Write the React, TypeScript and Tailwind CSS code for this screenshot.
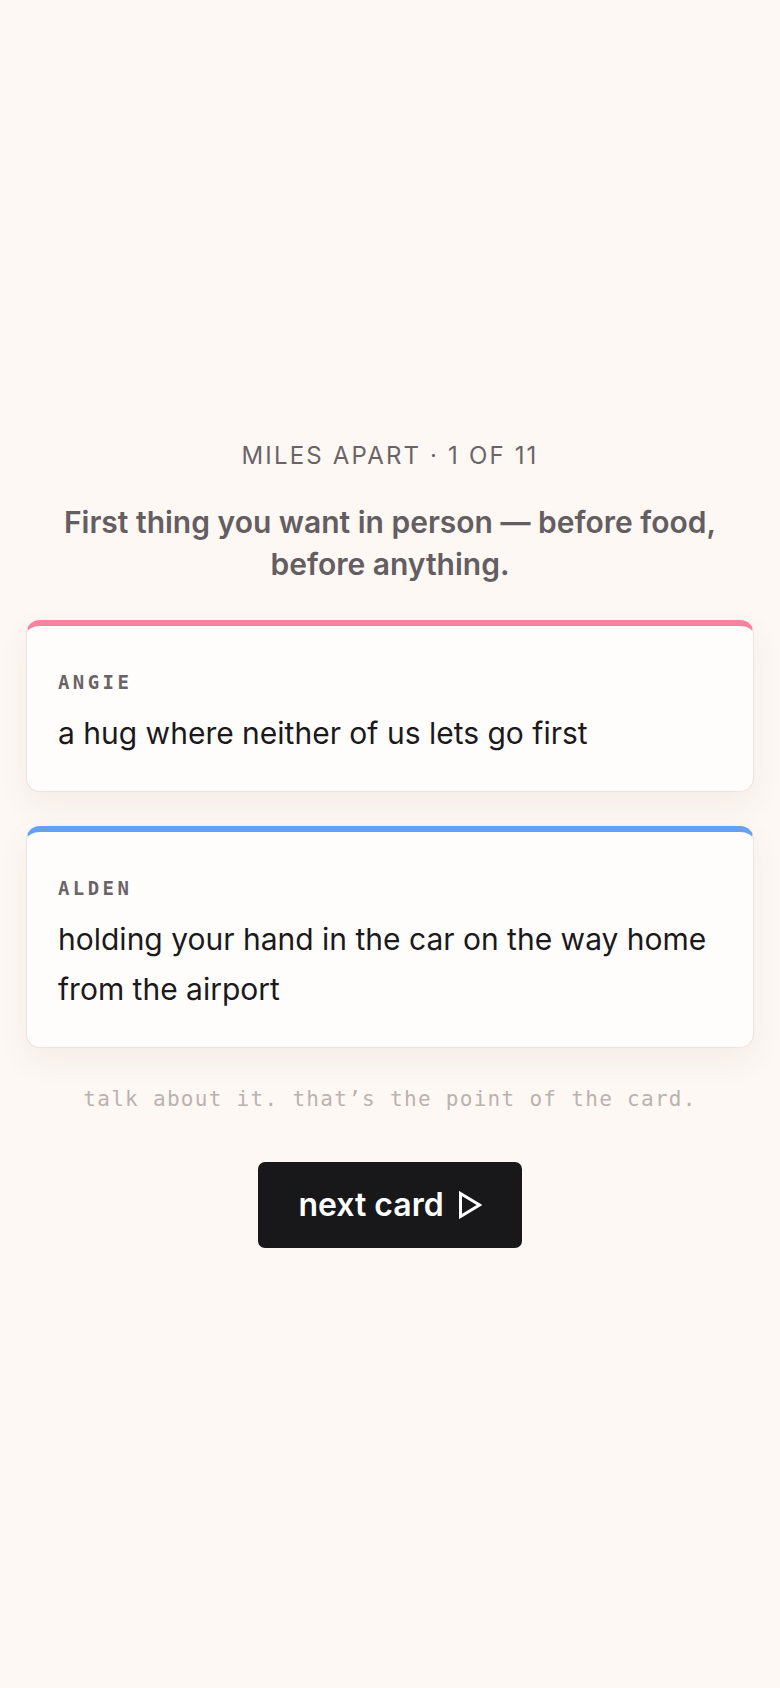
const sans = "font-['Inter','Noto_Sans',sans-serif]";
const mono = "font-['DejaVu_Sans_Mono','Liberation_Mono',monospace]";

type Answer = {
  name: string;
  text: string;
  accent: string;
};

const answers: Answer[] = [
  { name: 'Angie', text: 'a hug where neither of us lets go first', accent: 'border-t-[#f6829f]' },
  { name: 'Alden', text: 'holding your hand in the car on the way home from the airport', accent: 'border-t-[#66a0f2]' },
];

function PlayIcon() {
  return (
    <svg width="24" height="28" viewBox="0 0 24 28" fill="none" className="shrink-0">
      <path d="M2.5 2.5 L21.5 14 L2.5 25.5 Z" stroke="white" strokeWidth="3" strokeLinejoin="miter" />
    </svg>
  );
}

function AnswerCard({ name, text, accent }: Answer) {
  return (
    <div
      className={`w-full rounded-[14px] border border-[#efe2e1] border-t-[6px] ${accent} bg-[#fffdfc] px-[31px] pt-[44px] pb-[33px] shadow-[0_12px_32px_rgba(110,70,50,0.07)]`}
    >
      <div className={`${mono} text-[19px] leading-[24px] font-bold uppercase tracking-[0.18em] text-[#6b6467]`}>
        {name}
      </div>
      <p className={`${sans} mt-[14px] text-[30px] leading-[50px] text-[#1b191b]`}>{text}</p>
    </div>
  );
}

export default function App() {
  return (
    <div className={`${sans} flex min-h-screen flex-col items-center justify-center bg-[#fdf8f4] px-[26px]`}>
      <div className="text-[24px] leading-[32px] tracking-[0.09em] text-[#6b6467]">MILES APART · 1 OF 11</div>

      <h1 className="mt-[29px] text-center text-[30px] leading-[42px] font-semibold text-[#645d61]">
        First thing you want in person — before food, before anything.
      </h1>

      <div className="mt-[35px] flex w-full flex-col gap-[34px]">
        {answers.map((a) => (
          <AnswerCard key={a.name} {...a} />
        ))}
      </div>

      <p className={`${mono} mt-[36px] text-[21px] leading-[30px] tracking-[1.3px] text-[#bbb2b0]`}>
        talk about it. that’s the point of the card.
      </p>

      <button className="mt-[48px] flex h-[86px] w-[264px] items-center justify-center gap-[14px] rounded-[7px] bg-[#18181b] text-[32px] font-semibold text-white">
        <span>next card</span>
        <PlayIcon />
      </button>
    </div>
  );
}
